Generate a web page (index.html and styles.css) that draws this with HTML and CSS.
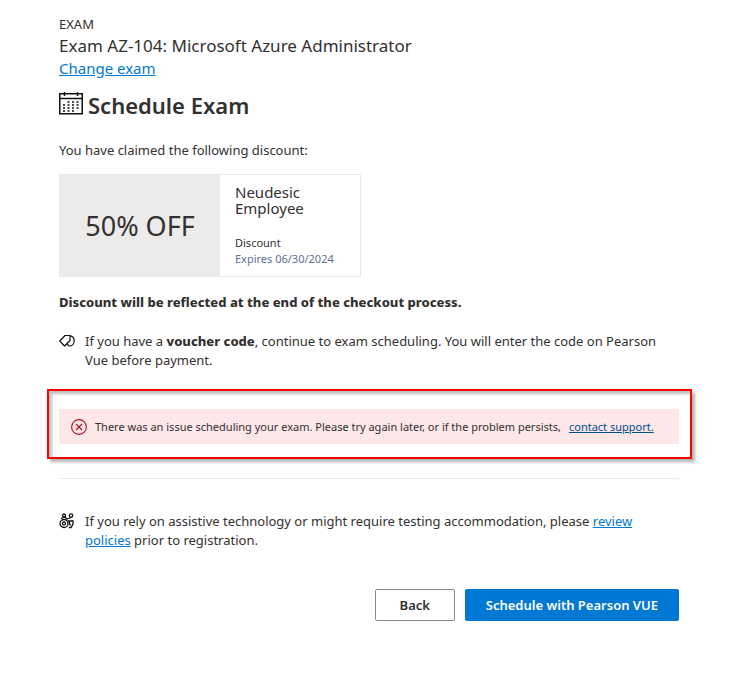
FILE: index.html
```html
<!DOCTYPE html>
<html lang="en">
<head>
  <meta charset="UTF-8">
  <meta name="viewport" content="width=device-width, initial-scale=1.0">
  <title>Schedule Exam</title>
  <link rel="stylesheet" href="styles.css">
</head>
<body>
  <main class="page">
    <header class="exam-info">
      <p class="label">EXAM</p>
      <p class="exam-name">Exam AZ-104: Microsoft Azure Administrator</p>
      <a class="change-link" href="#">Change exam</a>
    </header>

    <h1 class="title">
      <svg width="24" height="24" viewBox="0 0 24 24" fill="none" stroke="#111" stroke-width="1.5" aria-hidden="true">
        <path d="M.75 2.75h22.5v20H.75zM.75 7.5h22.5M5.5 1v4M18.5 1v4"/>
        <path d="M8.5 11h12M4 14h16.500M4 17h16.500M4 20h12" stroke-width="1.700" stroke-dasharray="2 2.500"/>
      </svg>
      Schedule Exam
    </h1>

    <p class="claimed">You have claimed the following discount:</p>

    <section class="discount-card">
      <div class="amount">50% OFF</div>
      <div class="details">
        <h2>Neudesic Employee</h2>
        <p>Discount</p>
        <p class="expires">Expires 06/30/2024</p>
      </div>
    </section>

    <p class="reflected">Discount will be reflected at the end of the checkout process.</p>

    <div class="note">
      <svg width="16" height="16" viewBox="0 0 16 16" fill="none" stroke="#111" stroke-width="1.2" stroke-linejoin="round" aria-hidden="true">
        <path d="M.8 8 6 2.5h5v5L5.5 13z"/>
        <path d="M11 2.8c2.6.4 4.2 2.4 4.2 4.9 0 3-2.2 5.3-5 5.3L7.8 11"/>
      </svg>
      <p>If you have a <b>voucher code</b>, continue to exam scheduling. You will enter the code on Pearson Vue before payment.</p>
    </div>

    <div class="alert-frame">
      <div class="alert" role="alert">
        <svg width="16" height="16" viewBox="0 0 16 16" fill="none" stroke="#b10e1c" stroke-width="1.1" aria-hidden="true">
          <circle cx="8" cy="8" r="7.4"/>
          <path d="M5 5l6 6M11 5l-6 6"/>
        </svg>
        <p>There was an issue scheduling your exam. Please try again later, or if the problem persists,</p>
        <a href="#">contact support.</a>
      </div>
    </div>

    <hr class="divider">

    <div class="note">
      <svg width="16" height="16" viewBox="0 0 16 16" fill="none" stroke="#111" stroke-width="1.3" aria-hidden="true">
        <circle cx="5" cy="10.5" r="4"/>
        <circle cx="5" cy="10.5" r="1.5"/>
        <circle cx="5" cy="2.5" r="1.5"/>
        <circle cx="12" cy="2.5" r="1.7"/>
        <path d="M2 5.5l4-1.5 2 2 4-1.5M8.5 8H14v3l-2 3.5h-2M10.500 8v3.500l1.500.5"/>
      </svg>
      <p>If you rely on assistive technology or might require testing accommodation, please <a href="#">review policies</a> prior to registration.</p>
    </div>

    <div class="actions">
      <button type="button" class="btn">Back</button>
      <button type="button" class="btn btn-primary">Schedule with Pearson VUE</button>
    </div>
  </main>
</body>
</html>
```
FILE: styles.css
```css
* {
  box-sizing: border-box;
}
body {
  margin: 0;
  background-color: #fff;
  color: #323130;
  font-family: 'Noto Sans', 'Open Sans', sans-serif;
  font-size: 13px;
  line-height: 19px;
}
p, h1, h2 {
  margin: 0;
}
a {
  color: #0078d4;
}
svg {
  flex-shrink: 0;
}
.page {
  padding: 15px 54px 40px 59px;
}
.exam-name {
  font-size: 17px;
  line-height: 23px;
}
.change-link {
  display: block;
  font-size: 15px;
  line-height: 22px;
}
.title {
  display: flex;
  align-items: center;
  gap: 5px;
  margin-top: 10px;
  font-size: 22px;
  font-weight: 600;
  line-height: 32px;
}
.title svg {
  margin-bottom: 4px;
}
.claimed {
  margin-top: 20px;
}
.discount-card {
  display: flex;
  width: 302px;
  margin-top: 14px;
  border: 1px solid #edebe9;
}
.amount {
  display: flex;
  align-items: center;
  justify-content: center;
  width: 160px;
  background-color: #edebe9;
  font-size: 27px;
}
.details {
  flex: 1;
  padding: 9px 15px;
  font-size: 11px;
  line-height: 16px;
}
.details h2 {
  margin-bottom: 19px;
  font-size: 15px;
  font-weight: 400;
  line-height: 16px;
}
.expires {
  color: #5c7193;
}
.reflected {
  margin-top: 16px;
  font-weight: 800;
}
.note {
  display: flex;
  gap: 10px;
  margin-top: 20px;
}
.note svg {
  margin-top: 1px;
}
.note b {
  font-weight: 800;
}
.alert-frame {
  margin: 19px -13px 0 -12px;
  padding: 18px 11px 13px 10px;
  border: 2px solid #f00;
  box-shadow: 3px 3px 3px rgba(0, 0, 0, 0.3), inset 3px 3px 3px rgba(0, 0, 0, 0.25);
}
.alert {
  display: flex;
  align-items: center;
  gap: 8px;
  padding: 8px 12px;
  background-color: #fde7e9;
  font-size: 11px;
}
.alert a {
  color: #004e8c;
}
.divider {
  margin: 19px 0 33px;
  border: 0;
  border-top: 1px solid #edebe9;
}
.actions {
  display: flex;
  justify-content: flex-end;
  gap: 10px;
  margin-top: 39px;
}
.btn {
  min-width: 80px;
  height: 32px;
  padding: 0 20px;
  border: 1px solid #8a8886;
  border-radius: 2px;
  background-color: #fff;
  color: #323130;
  font-family: inherit;
  font-size: 13px;
  font-weight: 600;
}
.btn-primary {
  border-color: #0078d4;
  background-color: #0078d4;
  color: #fff;
}
```
